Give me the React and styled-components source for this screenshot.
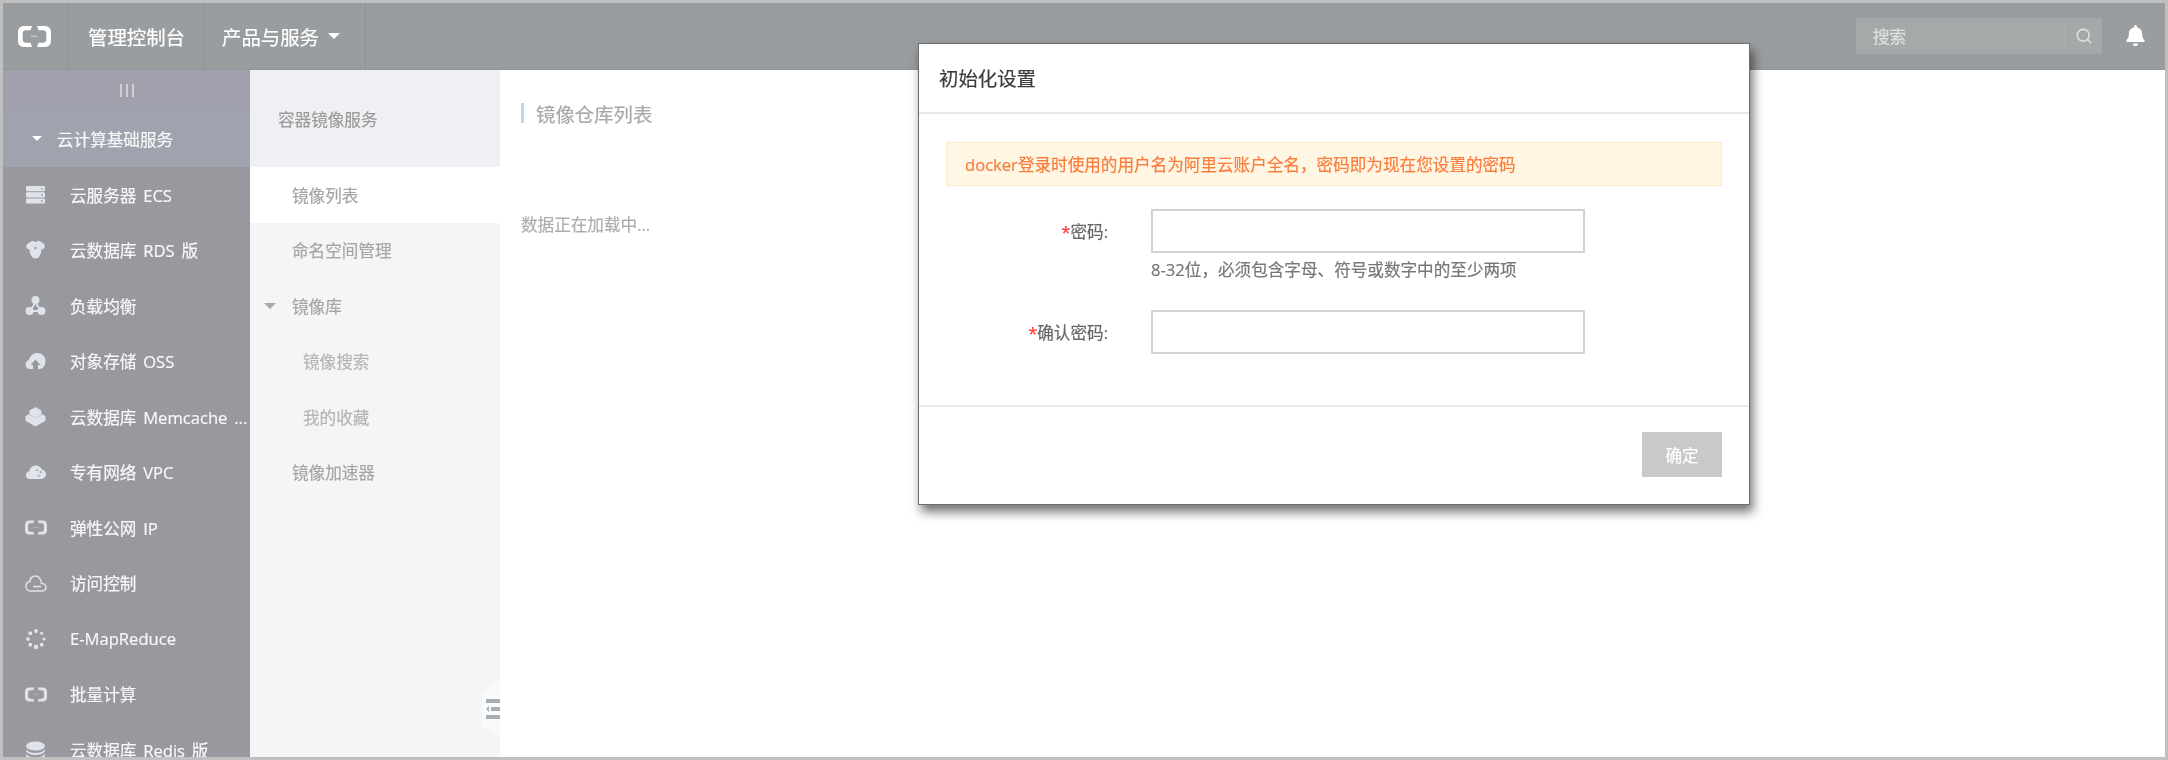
import React from 'react';
import styled, { createGlobalStyle } from 'styled-components';
import { Search } from 'lucide-react';
import { FaBell } from 'react-icons/fa';

const Global = createGlobalStyle`
  html, body { margin: 0; padding: 0; background: #fff; }
  * { box-sizing: border-box; }
`;
const FONT = `"Open Sans", "Noto Sans CJK SC", "Noto Sans", sans-serif`;

const Frame = styled.div`
  position: relative; width: 2168px; height: 760px; border: 3px solid #c0c0c0; background: #fff;
  overflow: hidden; display: flex; flex-direction: column; font-family: ${FONT}; font-size: 16.6px;
  filter: blur(0.45px); -webkit-text-stroke: 0.2px currentColor;
`;
const TopBar = styled.header`
  flex: 0 0 67px; display: flex; align-items: stretch; background: #9a9d9f; color: #fff;
  border-bottom: 1px solid #919496;
`;
const TopCell = styled.div`
  display: flex; align-items: center; width: ${p => p.$w}px; padding-left: ${p => p.$pl}px;
  border-right: 1px solid #8f9294; font-size: 19.4px; white-space: nowrap;
`;
const Spacer = styled.div`flex: 1;`;
const Caret = styled.span`
  display: inline-block; width: 0; height: 0; margin-left: ${p => p.$ml || 0}px; margin-right: ${p => p.$mr || 0}px;
  border-left: ${p => p.$s}px solid transparent; border-right: ${p => p.$s}px solid transparent;
  border-top: ${p => p.$s}px solid ${p => p.$c};
`;
const SearchBox = styled.div`
  align-self: center; margin-top: -1px; width: 246px; height: 36px; background: #a6a9aa; display: flex; align-items: center;
  padding-left: 17px; color: #dfe1e2; font-size: 16.6px; margin-right: 13px; border-radius: 1px;
`;
const SearchText = styled.span`flex: 1;`;
const SearchIconWrap = styled.span`
  width: 37px; height: 22px; display: flex; align-items: center; justify-content: center;
  border-left: 1px solid #b2b5b6; color: #e4e6e7;
`;
const BellWrap = styled.div`
  align-self: center; margin-top: -1px; width: 40px; margin-right: 10px; display: flex; justify-content: center; color: #fff;
`;
const Content = styled.div`flex: 1; display: flex; min-height: 0;`;
const Sidebar = styled.nav`flex: 0 0 247px; background: #98989e; color: #fff; overflow: hidden;`;
const Grip = styled.div`
  height: 40px; background: #a0a1ac; display: flex; align-items: center; justify-content: center; gap: 4px;
`;
const GripBar = styled.span`width: 2px; height: 13px; background: #cfd0d6;`;
const SectionHead = styled.div`
  height: 57px; background: #a0a2ad; display: flex; align-items: center; padding-left: 29px; color: #f6f7f9;
`;
const NavItem = styled.div`
  height: 55.5px; display: flex; align-items: center; padding-left: 22px; white-space: pre; color: #f6f7f9; word-spacing: 2.5px;
`;
const IconBox = styled.span`
  flex: 0 0 22px; min-width: 0; margin-right: 23px; display: flex; justify-content: center; color: #dfe3ea;
`;
const SubPanel = styled.aside`
  flex: 0 0 250px; position: relative; background: #f4f5f7; color: #a4a4a4; overflow: hidden;
`;
const SubHead = styled.div`
  height: 97px; background: #eef0f3; display: flex; align-items: center; padding-left: 28px; color: #9b9b9b;
`;
const SubItem = styled.div`
  height: 55.5px; display: flex; align-items: center; padding-left: ${p => p.$pl}px;
  background: ${p => p.$active ? '#fff' : 'transparent'}; color: ${p => p.$soft ? '#b5b5b5' : '#a6a6a6'};
`;
const Collapse = styled.div`
  position: absolute; right: 0; top: 610px; width: 18px; height: 58px; background: #f9fafb;
  clip-path: polygon(100% 0, 0 20%, 0 80%, 100% 100%); display: flex; align-items: center; justify-content: flex-end;
`;
const Main = styled.main`flex: 1; background: #fff; padding: 33px 0 0 21px;`;
const MainTitle = styled.div`
  height: 20px; display: flex; align-items: center; border-left: 3px solid #bcd7ec; padding-left: 12px; font-size: 19.4px; color: #a9a9a9;
`;
const Loading = styled.div`margin-top: 89px; color: #adadad;`;
const Modal = styled.div`
  position: absolute; left: 915px; top: 40px; width: 832px; height: 462px; background: #fff; border: 1px solid #6f6f6f;
  box-shadow: 3px 7px 10px rgba(0,0,0,.55); display: flex; flex-direction: column;
`;
const ModalHead = styled.div`
  flex: 0 0 70px; display: flex; align-items: center; padding: 0 0 2px 20px; font-size: 19.4px; color: #3c3c3c; border-bottom: 2px solid #e8e8e8;
`;
const ModalBody = styled.div`flex: 0 0 291px; padding: 28px 27px 0 27px;`;
const Notice = styled.div`
  height: 44px; display: flex; align-items: center; padding-left: 18px; background: #fff7e4; border: 1px solid #fdeccb; color: #fb7c3c;
`;
const FormRow = styled.div`display: flex; align-items: center; margin-top: ${p => p.$mt}px;`;
const Label = styled.label`flex: 0 0 162px; text-align: right; color: #666; `;
const Star = styled.span`color: #f33;`;
const Field = styled.div`
  margin-left: 43px; width: 434px; height: 44px; border: 2px solid #d2d2d2; background: #fff;
`;
const Hint = styled.div`margin: 5px 0 0 205px; height: 29px; line-height: 24px; color: #777;`;
const ModalFoot = styled.div`
  flex: 1; border-top: 2px solid #e8e8e8; padding: 25px 27px 0 0; display: flex; justify-content: flex-end; align-items: flex-start;
`;
const Confirm = styled.button`
  width: 80px; height: 45px; border: 0; background: #c9c9c9; color: #fff; font: inherit; padding: 0;
`;

const Svg = ({ children, w = 22, h = 22, vb = '0 0 22 22' }) => (
  <svg width={w} height={h} viewBox={vb} fill="currentColor" stroke="none">{children}</svg>
);
const Bracket = ({ w = 22, h = 15, fill = 'currentColor' }) => (
  <svg width={w} height={h} viewBox="0 0 33 21" fill={fill} stroke="none">
    <path d="M14 0H6C2.500 0 0 2.500 0 6v9c0 3.500 2.500 6 6 6h8l-1.500-4.200H8c-2 0-3.300-1-3.300-3V7.200c0-2 1.300-3 3.300-3h4.500zM19 0h8c3.500 0 6 2.500 6 6v9c0 3.500-2.500 6-6 6h-8l1.500-4.200H25c2 0 3.300-1 3.300-3V7.200c0-2-1.300-3-3.300-3h-4.500z" />
    <rect x="13" y="9.500" width="7" height="1.800" opacity=".35" />
  </svg>
);
const icons = {
  server: (
    <Svg>
      <rect x="1" y="2" width="19" height="5.200" rx="1" /><rect x="1" y="8.200" width="19" height="5.200" rx="1" /><rect x="1" y="14.400" width="19" height="5.200" rx="1" />
      <g fill="#98989e"><circle cx="17" cy="4.600" r=".9" /><circle cx="17" cy="10.800" r=".9" /><circle cx="17" cy="17" r=".9" /></g>
    </Svg>
  ),
  db: (
    <Svg>
      <path d="M6 2.500c1.800-1 3.400 0 4.500.8 1.200-.8 3-1.800 4.800-.8 2.500 1 5 3.500 4.500 5.500-.4 1.500-1.800 2.200-3.300 2.500 0 3-1.500 6.500-3 8-1.600 1.300-4.300 1.300-6 0-1.500-1.500-3-5-3-8C3 10.200 1.600 9.500 1.200 8 .7 6 3.500 3.500 6 2.500z" />
      <circle cx="10.500" cy="9" r="1.200" fill="#98989e" />
    </Svg>
  ),
  lb: (
    <Svg>
      <circle cx="10.500" cy="5" r="4" /><circle cx="4.500" cy="16" r="4" /><circle cx="16.500" cy="16" r="4" />
      <path d="M9 8l-3 5h2l2.500-4 2.500 4h2l-3-5zM8 15h5v2H8z" />
    </Svg>
  ),
  oss: (
    <Svg>
      <path d="M5 19c-3 0-4.500-2-4.500-4.500 0-2.300 1.500-4 3.500-4.400C5 6 8 3 12 3c5 0 8.500 3.500 8.500 8 0 4.500-2.500 8-6 8h-1.500v-4h2.500L10.500 9.500 5.500 15H8v4z" />
    </Svg>
  ),
  box: (
    <Svg>
      <path d="M10.500 1l6 3.500v4l-6 3.500-6-3.500v-4z" />
      <path d="M3.500 8.300l7 4 7-4 3 2v4.500L10.500 20.500.5 14.800v-4.500z" />
    </Svg>
  ),
  vpc: (
    <Svg vb="0 0 24 22" w={24}>
      <path d="M5.500 18.500C2.800 18.500 1 16.800 1 14.500c0-2.200 1.600-3.900 3.700-4.200C5.300 6.600 8.300 4 11.800 4c3 0 5.400 1.700 6.400 4.300 2.800.3 4.800 2.500 4.800 5.100 0 2.900-2.200 5.100-5 5.100z" />
      <g fill="#98989e"><circle cx="13" cy="9" r="1" /><circle cx="17" cy="11" r="1" /><circle cx="15" cy="15" r="1" /></g>
    </Svg>
  ),
  cloud: (
    <svg width="22" height="19" viewBox="0 0 22 19" fill="none" stroke="currentColor" strokeWidth="1.600">
      <path d="M5 17h12c2.200 0 4-1.600 4-3.700 0-2.200-1.800-3.800-4-3.800h-.5C16 5 13.500 2 10.500 2 7.500 2 5.300 4.200 4.800 7.500 2.700 8 1 9.700 1 12c0 2.800 1.800 5 4 5z" />
      <path d="M8 12.500h8" />
    </svg>
  ),
  spin: (
    <Svg>
      {[[11, 3, 2], [16.700, 5.300, 1.500], [19, 11, 1.600], [16.700, 16.700, 1.900], [11, 19, 2.300], [5.300, 16.700, 1.900], [3, 11, 1.900], [5.300, 5.300, 2]].map(([x, y, r]) => (
        <circle key={x + '-' + y} cx={x} cy={y} r={r} />
      ))}
    </Svg>
  ),
  stack: (
    <Svg>
      <ellipse cx="10.500" cy="7" rx="9.500" ry="4.500" />
      <path d="M1 10.500c2 2.500 5.500 3.500 9.500 3.500s7.500-1 9.500-3.500v2c-2 2.500-5.500 3.500-9.500 3.500S3 15 1 12.500zM1 15c2 2.500 5.500 3.500 9.500 3.500S18 17.500 20 15v2c-2 2.500-5.500 3.500-9.500 3.500S3 19.500 1 17z" />
    </Svg>
  ),
};

const items = [
  ['server', '云服务器 ECS'],
  ['db', '云数据库 RDS 版'],
  ['lb', '负载均衡'],
  ['oss', '对象存储 OSS'],
  ['box', '云数据库 Memcache ...'],
  ['vpc', '专有网络 VPC'],
  ['bracket', '弹性公网 IP'],
  ['cloud', '访问控制'],
  ['spin', 'E-MapReduce'],
  ['bracket', '批量计算'],
  ['stack', '云数据库 Redis 版'],
];

export default function App() {
  return (
    <>
      <Global />
      <Frame>
        <TopBar>
          <TopCell $w={66} $pl={15}><Bracket w={33} h={21} fill="#fff" /></TopCell>
          <TopCell $w={135} $pl={19}>管理控制台</TopCell>
          <TopCell $w={162} $pl={18}>产品与服务<Caret $s={6} $c="#fff" $ml={9} /></TopCell>
          <Spacer />
          <SearchBox>
            <SearchText>搜索</SearchText>
            <SearchIconWrap><Search size={18} strokeWidth={1.8} /></SearchIconWrap>
          </SearchBox>
          <BellWrap><FaBell size={21} /></BellWrap>
        </TopBar>
        <Content>
          <Sidebar>
            <Grip><GripBar /><GripBar /><GripBar /></Grip>
            <SectionHead><Caret $s={5} $c="#fff" $mr={15} />云计算基础服务</SectionHead>
            {items.map(([icon, label]) => (
              <NavItem key={label}>
                <IconBox>{icon === 'bracket' ? <Bracket /> : icons[icon]}</IconBox>
                {label}
              </NavItem>
            ))}
          </Sidebar>
          <SubPanel>
            <SubHead>容器镜像服务</SubHead>
            <SubItem $pl={42} $active>镜像列表</SubItem>
            <SubItem $pl={42}>命名空间管理</SubItem>
            <SubItem $pl={14}><Caret $s={6} $c="#a9a9a9" $mr={16} />镜像库</SubItem>
            <SubItem $pl={53} $soft>镜像搜索</SubItem>
            <SubItem $pl={53} $soft>我的收藏</SubItem>
            <SubItem $pl={42}>镜像加速器</SubItem>
            <Collapse>
              <svg width="14" height="20" viewBox="0 0 14 20" fill="#a8abb3" stroke="none">
                <rect y="0" width="14" height="4" />
                <path d="M0 10l3-3v6z" />
                <rect x="5" y="8" width="9" height="4" />
                <rect y="16" width="14" height="4" />
              </svg>
            </Collapse>
          </SubPanel>
          <Main>
            <MainTitle>镜像仓库列表</MainTitle>
            <Loading>数据正在加载中...</Loading>
          </Main>
        </Content>
        <Modal>
          <ModalHead>初始化设置</ModalHead>
          <ModalBody>
            <Notice>docker登录时使用的用户名为阿里云账户全名，密码即为现在您设置的密码</Notice>
            <FormRow $mt={23}>
              <Label><Star>*</Star>密码:</Label>
              <Field />
            </FormRow>
            <Hint>8-32位，必须包含字母、符号或数字中的至少两项</Hint>
            <FormRow $mt={23}>
              <Label><Star>*</Star>确认密码:</Label>
              <Field />
            </FormRow>
          </ModalBody>
          <ModalFoot><Confirm>确定</Confirm></ModalFoot>
        </Modal>
      </Frame>
    </>
  );
}
